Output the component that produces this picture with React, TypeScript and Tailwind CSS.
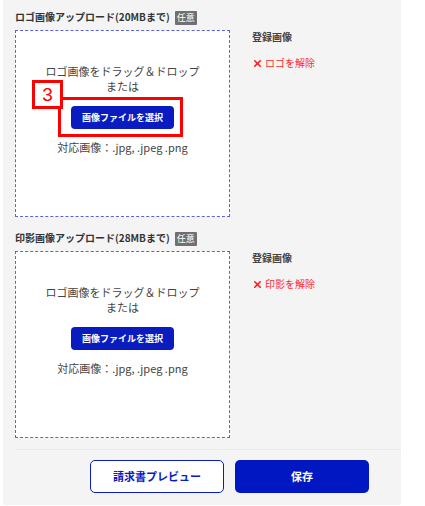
import { X } from 'lucide-react';

const jp = "font-['Noto_Sans_CJK_JP','Noto_Sans',sans-serif]";

function UploadSection({ label, remove, marked }: { label: string; remove: string; marked?: boolean }) {
  return (
    <div className="flex">
      {/* Left: label + drop zone */}
      <div className="w-[215px]">
        <div className="h-[22px] flex items-center gap-[5px] pb-[5px]">
          <span className="text-[10px] font-bold text-[#333]">{label}</span>
          <span className="mt-[3px] bg-[#707070] text-white text-[9px] leading-[14px] px-[2px] rounded-[1px]">任意</span>
        </div>
        <div className="relative h-[187px] bg-white border border-dashed border-[#5b63dc] flex flex-col items-center pt-[33px] text-[11px] leading-[15px] text-[#444]">
          <span>ロゴ画像をドラッグ＆ドロップ</span>
          <span>または</span>
          <button className="mt-[12px] h-[23px] w-[103px] rounded-[4px] bg-[#0a1cbf] text-white text-[9px] font-bold">
            画像ファイルを選択
          </button>
          <span className="mt-[11px]">対応画像：.jpg, .jpeg .png</span>

          {marked && (
            <>
              <div className="absolute left-[42px] top-[66px] w-[125px] h-[40px] border-[3px] border-[#ff0000]" />
              <div className="absolute left-[16px] top-[49px] w-[31px] h-[29px] border-[3px] border-[#ff0000] bg-white flex items-center justify-center text-[19px] leading-none text-[#ff0000] font-['Liberation_Sans',sans-serif]">
                3
              </div>
            </>
          )}
        </div>
      </div>

      {/* Right: registered image */}
      <div className="pl-[22px] pt-[22px]">
        <div className="text-[10px] leading-[14px] font-bold text-[#444]">登録画像</div>
        <div className="mt-[12px] flex items-center gap-[2px] text-[10px] leading-[14px] text-[#ff2a2a]">
          <X size={11} strokeWidth={3.5} className="text-[#ff1a1a]" />
          <span>{remove}</span>
        </div>
      </div>
    </div>
  );
}

export default function App() {
  return (
    <div className={`w-[425px] h-[506px] bg-white ${jp}`}>
      <div className="ml-[3px] w-[398px] h-[505px] bg-[#f4f4f5] pl-[12px] pt-[8px]">
        <UploadSection label="ロゴ画像アップロード(20MBまで)" remove="ロゴを解除" marked />
        <div className="mt-[12px]">
          <UploadSection label="印影画像アップロード(28MBまで)" remove="印影を解除" />
        </div>

        {/* Footer */}
        <div className="mt-[11px] h-[1px] bg-[#e7e7ee]" />
        <div className="mt-[10px] pl-[75px] flex gap-[11px]">
          <button className="w-[134px] h-[33px] rounded-[5px] bg-white border-[1.5px] border-[#0a1cbf] text-[#0a1cbf] text-[11px] font-bold">
            請求書プレビュー
          </button>
          <button className="w-[134px] h-[33px] rounded-[5px] bg-[#0017c2] text-white text-[11px] font-bold">
            保存
          </button>
        </div>
      </div>
    </div>
  );
}
